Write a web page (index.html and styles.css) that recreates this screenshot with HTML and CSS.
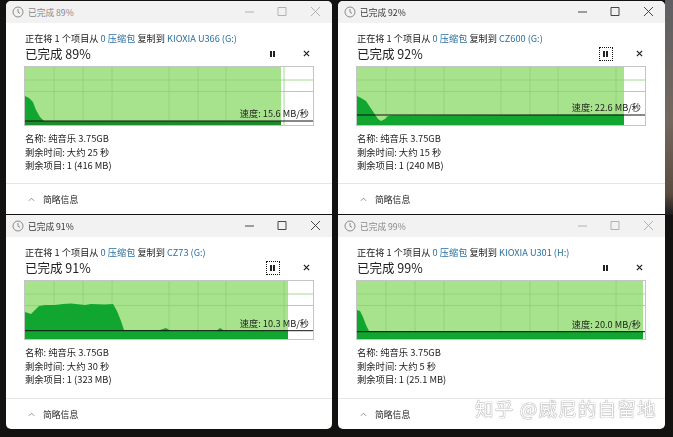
FILE: index.html
```html
<!DOCTYPE html>
<html lang="zh">
<head>
<meta charset="utf-8">
<title>文件复制进度</title>
<link rel="stylesheet" href="styles.css">
</head>
<body>
<main class="desktop">

<section class="win inactive">
  <header class="titlebar">
    <svg class="clock" viewBox="0 0 12 12"><circle cx="6" cy="6" r="5"/><path d="M6 3v3.2l2 1.2"/></svg>
    <span class="title">已完成 89%</span>
    <svg class="ctl" viewBox="0 0 76 12"><path d="M0 6h9M33 1.500h8v8h-8zM66 1l9 9M75 1l-9 9"/></svg>
  </header>
  <div class="main">
    <p class="source">正在将 1 个项目从 <span class="link">0 压缩包</span> 复制到 <span class="link">KIOXIA U366 (G:)</span></p>
    <div class="headline"><span>已完成 89%</span>
      <span class="btns"><span class="pause"><i></i><i></i></span><svg class="stop" viewBox="0 0 8 8"><path d="M1 1l6 6M7 1l-6 6"/></svg></span></div>
    <div class="chart">
      <svg viewBox="0 0 288 58">
        <rect class="prog" width="256" height="58"/>
        <path class="grid" d="M29 0v58M58 0v58M87 0v58M144 0v58M173 0v58M201 0v58M259 0v58M0 13h288M0 24.500h288"/>
        <path class="flow" d="M0 29L4 31L8 35L11 43L15 50L19 54L256 54V58H0Z"/>
        <path class="base" d="M0 54.500h256V58H0Z"/>
        <path class="line" d="M0 54h288"/>
      </svg>
      <span class="speed s1">速度: 15.6 MB/秒</span>
    </div>
    <div class="details">
      <p>名称: 纯音乐 3.75GB</p>
      <p>剩余时间: 大约 25 秒</p>
      <p>剩余项目: 1 (416 MB)</p>
    </div>
  </div>
  <footer class="foot"><svg class="chev" viewBox="0 0 8 5"><path d="M1 4l3-3 3 3"/></svg><span>简略信息</span></footer>
</section>

<section class="win">
  <header class="titlebar">
    <svg class="clock" viewBox="0 0 12 12"><circle cx="6" cy="6" r="5"/><path d="M6 3v3.2l2 1.2"/></svg>
    <span class="title">已完成 92%</span>
    <svg class="ctl" viewBox="0 0 76 12"><path d="M0 6h9M33 1.500h8v8h-8zM66 1l9 9M75 1l-9 9"/></svg>
  </header>
  <div class="main">
    <p class="source">正在将 1 个项目从 <span class="link">0 压缩包</span> 复制到 <span class="link">CZ600 (G:)</span></p>
    <div class="headline"><span>已完成 92%</span>
      <span class="btns"><span class="pause focus"><i></i><i></i></span><svg class="stop" viewBox="0 0 8 8"><path d="M1 1l6 6M7 1l-6 6"/></svg></span></div>
    <div class="chart">
      <svg viewBox="0 0 288 58">
        <rect class="prog" width="267" height="58"/>
        <path class="grid" d="M29 0v58M58 0v58M87 0v58M144 0v58M173 0v58M201 0v58M259 0v58M0 13h288M0 24.500h288"/>
        <path class="flow" d="M0 29L4 31L9 34L13 40L17 46L21 52L24 54L28 52L31 49L35 48.500L267 47.500V58H0Z"/>
        <path class="line" d="M0 48h288"/>
      </svg>
      <span class="speed s2">速度: 22.6 MB/秒</span>
    </div>
    <div class="details">
      <p>名称: 纯音乐 3.75GB</p>
      <p>剩余时间: 大约 15 秒</p>
      <p>剩余项目: 1 (240 MB)</p>
    </div>
  </div>
  <footer class="foot"><svg class="chev" viewBox="0 0 8 5"><path d="M1 4l3-3 3 3"/></svg><span>简略信息</span></footer>
</section>

<section class="win">
  <header class="titlebar">
    <svg class="clock" viewBox="0 0 12 12"><circle cx="6" cy="6" r="5"/><path d="M6 3v3.2l2 1.2"/></svg>
    <span class="title">已完成 91%</span>
    <svg class="ctl" viewBox="0 0 76 12"><path d="M0 6h9M33 1.500h8v8h-8zM66 1l9 9M75 1l-9 9"/></svg>
  </header>
  <div class="main">
    <p class="source">正在将 1 个项目从 <span class="link">0 压缩包</span> 复制到 <span class="link">CZ73 (G:)</span></p>
    <div class="headline"><span>已完成 91%</span>
      <span class="btns"><span class="pause focus"><i></i><i></i></span><svg class="stop" viewBox="0 0 8 8"><path d="M1 1l6 6M7 1l-6 6"/></svg></span></div>
    <div class="chart">
      <svg viewBox="0 0 288 58">
        <rect class="prog" width="263" height="58"/>
        <path class="grid" d="M29 0v58M58 0v58M87 0v58M144 0v58M173 0v58M201 0v58M259 0v58M0 13h288M0 24.500h288"/>
        <path class="flow" d="M0 31L6 33L10 29L14 25L20 24L30 24L38 23L46 22.500L60 24L66 23L80 23.500L88 23L92 30L96 40L99 49L135 49L141 47L145 49.500L192 49.500L195 47L199 49.500L263 49.500V58H0Z"/>
        <path class="line" d="M0 49.700h288"/>
      </svg>
      <span class="speed s3">速度: 10.3 MB/秒</span>
    </div>
    <div class="details">
      <p>名称: 纯音乐 3.75GB</p>
      <p>剩余时间: 大约 30 秒</p>
      <p>剩余项目: 1 (323 MB)</p>
    </div>
  </div>
  <footer class="foot"><svg class="chev" viewBox="0 0 8 5"><path d="M1 4l3-3 3 3"/></svg><span>简略信息</span></footer>
</section>

<section class="win inactive">
  <header class="titlebar">
    <svg class="clock" viewBox="0 0 12 12"><circle cx="6" cy="6" r="5"/><path d="M6 3v3.2l2 1.2"/></svg>
    <span class="title">已完成 99%</span>
    <svg class="ctl" viewBox="0 0 76 12"><path d="M0 6h9M33 1.500h8v8h-8zM66 1l9 9M75 1l-9 9"/></svg>
  </header>
  <div class="main">
    <p class="source">正在将 1 个项目从 <span class="link">0 压缩包</span> 复制到 <span class="link">KIOXIA U301 (H:)</span></p>
    <div class="headline"><span>已完成 99%</span>
      <span class="btns"><span class="pause"><i></i><i></i></span><svg class="stop" viewBox="0 0 8 8"><path d="M1 1l6 6M7 1l-6 6"/></svg></span></div>
    <div class="chart">
      <svg viewBox="0 0 288 58">
        <rect class="prog" width="286" height="58"/>
        <path class="grid" d="M29 0v58M58 0v58M87 0v58M144 0v58M173 0v58M201 0v58M259 0v58M0 13h288M0 24.500h288"/>
        <path class="flow" d="M0 29L3 30L6 36L9 44L12 50L286 50.500V58H0Z"/>
        <path class="line" d="M0 50.700h288"/>
      </svg>
      <span class="speed s4">速度: 20.0 MB/秒</span>
    </div>
    <div class="details">
      <p>名称: 纯音乐 3.75GB</p>
      <p>剩余时间: 大约 5 秒</p>
      <p>剩余项目: 1 (25.1 MB)</p>
    </div>
  </div>
  <footer class="foot"><svg class="chev" viewBox="0 0 8 5"><path d="M1 4l3-3 3 3"/></svg><span>简略信息</span></footer>
</section>

</main>
<div class="mark">知乎 @威尼的自留地</div>
</body>
</html>
```
FILE: styles.css
```css
* { box-sizing: border-box; }
html, body { margin: 0; padding: 0; }
body {
  position: relative;
  width: 673px;
  height: 437px;
  overflow: hidden;
  font-family: "Noto Sans CJK SC", "Liberation Sans", sans-serif;
  color: #222;
  background:
    linear-gradient(#5f5f64, #74685f 55%, #5b4c40 90%, #1c1c20) right top / 8px 215px no-repeat,
    #141210;
}
p { margin: 0; }

.desktop {
  display: grid;
  grid-template-columns: 326px 327px;
  grid-template-rows: 213px 214px;
  column-gap: 6px;
  row-gap: 1px;
  padding: 1px 0 0 6px;
  filter: blur(0.4px);
}

.win {
  display: flex;
  flex-direction: column;
  background: #fff;
  border-radius: 5px 5px 0 0;
  overflow: hidden;
}
.win:nth-child(n+3) { border-radius: 0 0 5px 5px; }

.titlebar {
  display: flex;
  align-items: center;
  flex: none;
  height: 22px;
  padding: 0 11px 0 6px;
  background: #f2f2f2;
  color: #333;
  font-size: 8.700px;
}
.clock {
  width: 12px;
  height: 12px;
  margin-right: 4px;
  fill: none;
  stroke: #8a8a8a;
  stroke-width: 1;
}
.title { flex: 1; }
.ctl {
  width: 76px;
  height: 12px;
  fill: none;
  stroke: #333;
  stroke-width: .9;
}
.inactive .titlebar { color: #888; }
.inactive .ctl { stroke: #aaa; }

.main { padding: 8px 19px 0; }
.source {
  height: 14px;
  line-height: 14px;
  font-size: 9.200px;
  white-space: nowrap;
}
.link { color: #2a6f9e; }

.headline {
  display: flex;
  justify-content: space-between;
  align-items: center;
  height: 17px;
  font-size: 12.500px;
  color: #222;
}
.btns {
  display: flex;
  align-items: center;
  gap: 23.500px;
  margin-right: 3px;
}
.pause {
  display: flex;
  justify-content: center;
  gap: 1.500px;
  align-items: center;
  width: 14px;
  height: 14px;
}
.pause i { width: 1.500px; height: 6px; background: #222; }
.pause.focus { outline: 1px dotted #111; outline-offset: -1px; }
.stop {
  width: 7px;
  height: 7px;
  fill: none;
  stroke: #222;
  stroke-width: 1.400;
}

.chart {
  position: relative;
  width: 288px;
  height: 58px;
  margin-top: 5px;
  outline: 1px solid #c4c4c4;
  background: #fff;
}
.chart svg { display: block; width: 288px; height: 58px; }
.prog { fill: #a6e38c; }
.grid { fill: none; stroke: #8fcf7a; stroke-width: .8; }
.flow { fill: #10a62f; }
.base { fill: #1d8a2b; }
.line { fill: none; stroke: #111; stroke-width: 1; }

.speed {
  position: absolute;
  right: 4px;
  font-size: 9.200px;
  line-height: 12px;
  color: #222;
  white-space: nowrap;
}
.s1 { top: 40px; }
.s2 { top: 34px; }
.s3 { top: 36px; }
.s4 { top: 37px; }

.details {
  margin-top: 7px;
  font-size: 9.300px;
  line-height: 13.500px;
  color: #222;
}

.foot {
  display: flex;
  align-items: center;
  flex: none;
  height: 31px;
  margin-top: auto;
  padding-left: 22px;
  border-top: 1px solid #e6e6e6;
  font-size: 8.800px;
}
.chev {
  width: 7px;
  height: 5px;
  margin-right: 8px;
  fill: none;
  stroke: #777;
  stroke-width: .9;
}

.mark {
  position: absolute;
  left: 475px;
  top: 396px;
  font-size: 18.500px;
  line-height: 24px;
  letter-spacing: 1.200px;
  color: #fff;
  text-shadow: 0 0 1px #888, 0 0 1px #888;
  white-space: nowrap;
}
```
